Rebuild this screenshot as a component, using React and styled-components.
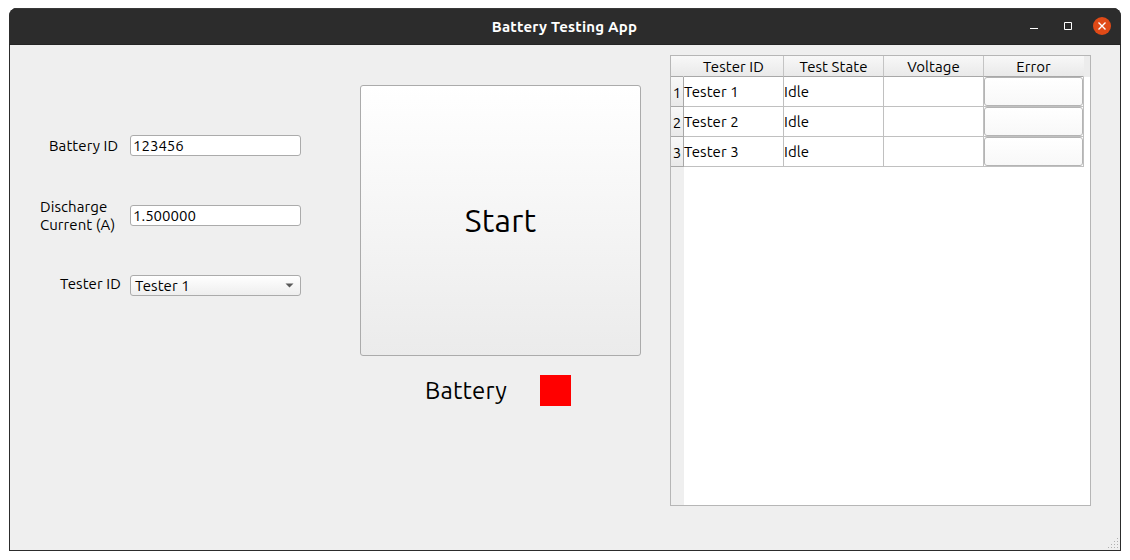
import React from "react";
import styled, { createGlobalStyle } from "styled-components";

const GlobalStyle = createGlobalStyle`
  * { box-sizing: border-box; }
  body {
    margin: 0;
    background: #fff;
    color: #000;
    font-family: Ubuntu, "Noto Sans", sans-serif;
    font-size: 15px;
    letter-spacing: 0.08px;
  }
  button, input { font: inherit; color: inherit; letter-spacing: inherit; }
`;

const Desktop = styled.div`
  width: 1130px;
  height: 560px;
  padding: 8px 9px 9px;
  overflow: hidden;
`;

const Window = styled.div`
  display: flex;
  flex-direction: column;
  width: 1112px;
  height: 543px;
  border-radius: 8px 8px 0 0;
  overflow: hidden;
  background: #2c2c2c;
`;

const TitleBar = styled.header`
  display: grid;
  grid-template-columns: 1fr auto 1fr;
  align-items: center;
  flex: 0 0 37px;
  padding-right: 10px;
  background: #2c2c2c;
  border-top: 1px solid #383838;
  border-bottom: 1px solid #242424;
  color: #fff;
`;

const Title = styled.h1`
  grid-column: 2;
  margin: 0 0 0 9px;
  font-size: 15px;
  line-height: 20px;
  font-weight: 700;
  letter-spacing: 0.2px;
`;

const WindowControls = styled.div`
  display: flex;
  justify-content: flex-end;
  align-items: center;
  gap: 16px;
  margin-bottom: 1px;
`;

const ControlIcon = styled.svg`
  display: block;
  width: 18px;
  height: 18px;
`;

const Content = styled.main`
  display: flex;
  align-items: flex-start;
  flex: 1;
  margin: 0 1px 1px;
  background: #efefef;
`;

const Form = styled.form`
  display: flex;
  flex-direction: column;
  gap: 34px;
  width: 350px;
  padding: 83px 0 0 30px;
`;

const Field = styled.div`
  display: flex;
  align-items: center;
  height: 36px;
`;

const Label = styled.label`
  flex: 0 0 90px;
  padding-left: ${(p) => p.$indent}px;
  padding-bottom: ${(p) => p.$lift || 0}px;
  line-height: 18px;
  white-space: pre;
`;

const TextInput = styled.input`
  width: 171px;
  height: 21px;
  margin-bottom: 1px;
  padding: 0 0 0 2px;
  border: 1px solid #ababab;
  border-radius: 3px;
  background: #fff;
  line-height: 19px;
  letter-spacing: 0;
  outline: none;
`;

const Select = styled.button`
  display: flex;
  align-items: center;
  justify-content: space-between;
  width: 171px;
  height: 21px;
  margin-bottom: 1px;
  padding: 1px 6px 0 4px;
  border: 1px solid #ababab;
  border-radius: 3px;
  background: linear-gradient(#ffffff, #eeeeee);
  line-height: 18px;
`;

const Arrow = styled.svg`
  display: block;
  width: 9px;
  height: 5px;
  margin-bottom: 1px;
`;

const Actions = styled.section`
  width: 310px;
  padding-top: 40px;
`;

const StartButton = styled.button`
  display: block;
  width: 281px;
  height: 271px;
  padding: 0 0 2px;
  border: 1px solid #ababab;
  border-radius: 3px;
  background: linear-gradient(#ffffff, #ebebeb);
  font-size: 32px;
  letter-spacing: 0.25px;
`;

const BatteryStatus = styled.div`
  display: flex;
  align-items: center;
  height: 31px;
  margin-top: 19px;
  padding-left: 65px;
  font-size: 24px;
`;

const StatusName = styled.span`
  width: 115px;
  padding-top: 1px;
  line-height: 28px;
  letter-spacing: 0.15px;
`;

const StatusLamp = styled.span`
  width: 31px;
  height: 31px;
  background: #ff0000;
`;

const TableFrame = styled.section`
  display: flex;
  flex-direction: column;
  width: 421px;
  height: 451px;
  margin-top: 10px;
  border: 1px solid #b6b6b6;
  background: linear-gradient(90deg, #efefef 13px, #ffffff 13px);
`;

const HeaderRow = styled.div`
  display: grid;
  grid-template-columns: 13px repeat(4, 100px) 1fr;
  grid-template-rows: 21px;
  height: 21px;
  background: #ececec;
`;

const HeaderCell = styled.div`
  border-right: 1px solid ${(p) => (p.$open ? "transparent" : "#c4c4c4")};
  border-bottom: 1px solid #a8a8a8;
  background: linear-gradient(#f8f8f8, #e9e9e9);
  line-height: 22px;
  text-align: center;
`;

const TableRow = styled.div`
  display: grid;
  grid-template-columns: 13px repeat(4, 100px);
  grid-template-rows: 30px;
  height: 30px;
`;

const RowNumber = styled.div`
  border-right: 1px solid #a8a8a8;
  border-bottom: 1px solid #a8a8a8;
  background: linear-gradient(#f8f8f8, #e9e9e9);
  line-height: 32px;
  text-align: center;
`;

const Cell = styled.div`
  border-right: 1px solid #c0c0c0;
  border-bottom: 1px solid #c0c0c0;
  line-height: 30px;
`;

const ErrorButton = styled.button`
  display: block;
  width: 99px;
  height: 29px;
  border: 1px solid #b4b4b4;
  border-radius: 3px;
  background: linear-gradient(#ffffff, #f8f8f8);
`;

const SizeGrip = styled.svg`
  align-self: flex-end;
  margin-left: auto;
  width: 12px;
  height: 12px;
`;

const columns = ["Tester ID", "Test State", "Voltage", "Error"];

const testers = [
  { name: "Tester 1", state: "Idle" },
  { name: "Tester 2", state: "Idle" },
  { name: "Tester 3", state: "Idle" },
];

const gripDots = [
  [9, 0], [6, 3], [9, 3], [3, 6], [6, 6], [9, 6], [0, 9], [3, 9], [6, 9], [9, 9],
];

export default function App() {
  return (
    <Desktop>
      <GlobalStyle />
      <Window>
        <TitleBar>
          <Title>Battery Testing App</Title>
          <WindowControls>
            <ControlIcon viewBox="0 0 18 18">
              <path d="M5 11.5h8" stroke="#fff" />
            </ControlIcon>
            <ControlIcon viewBox="0 0 18 18">
              <path d="M5.5 5.5h7v7h-7z" fill="none" stroke="#fff" />
            </ControlIcon>
            <ControlIcon viewBox="0 0 18 18">
              <circle cx="9" cy="9" r="9" fill="#e04a17" />
              <path d="M5.5 5.5l7 7M12.5 5.5l-7 7" stroke="#fff" strokeWidth="1.4" />
            </ControlIcon>
          </WindowControls>
        </TitleBar>
        <Content>
          <Form>
            <Field>
              <Label $indent={9}>Battery ID</Label>
              <TextInput defaultValue="123456" />
            </Field>
            <Field>
              <Label $indent={0}>{"Discharge\nCurrent (A)"}</Label>
              <TextInput defaultValue="1.500000" />
            </Field>
            <Field>
              <Label $indent={20} $lift={4}>Tester ID</Label>
              <Select type="button">
                Tester 1
                <Arrow viewBox="0 0 9 5">
                  <path d="M0.5 0.5h8l-4 4z" fill="#5a5a5a" />
                </Arrow>
              </Select>
            </Field>
          </Form>
          <Actions>
            <StartButton>Start</StartButton>
            <BatteryStatus>
              <StatusName>Battery</StatusName>
              <StatusLamp />
            </BatteryStatus>
          </Actions>
          <TableFrame>
            <HeaderRow>
              <HeaderCell $open />
              {columns.map((name, i) => (
                <HeaderCell key={name} $open={i === columns.length - 1}>{name}</HeaderCell>
              ))}
            </HeaderRow>
            {testers.map((t, i) => (
              <TableRow key={t.name}>
                <RowNumber>{i + 1}</RowNumber>
                <Cell>{t.name}</Cell>
                <Cell>{t.state}</Cell>
                <Cell />
                <Cell><ErrorButton aria-label="Error" /></Cell>
              </TableRow>
            ))}
          </TableFrame>
          <SizeGrip viewBox="0 0 12 12">
            {gripDots.map(([x, y]) => (
              <rect key={`${x}-${y}`} x={x} y={y} width="1" height="1" fill="#b0b0b0" />
            ))}
          </SizeGrip>
        </Content>
      </Window>
    </Desktop>
  );
}
